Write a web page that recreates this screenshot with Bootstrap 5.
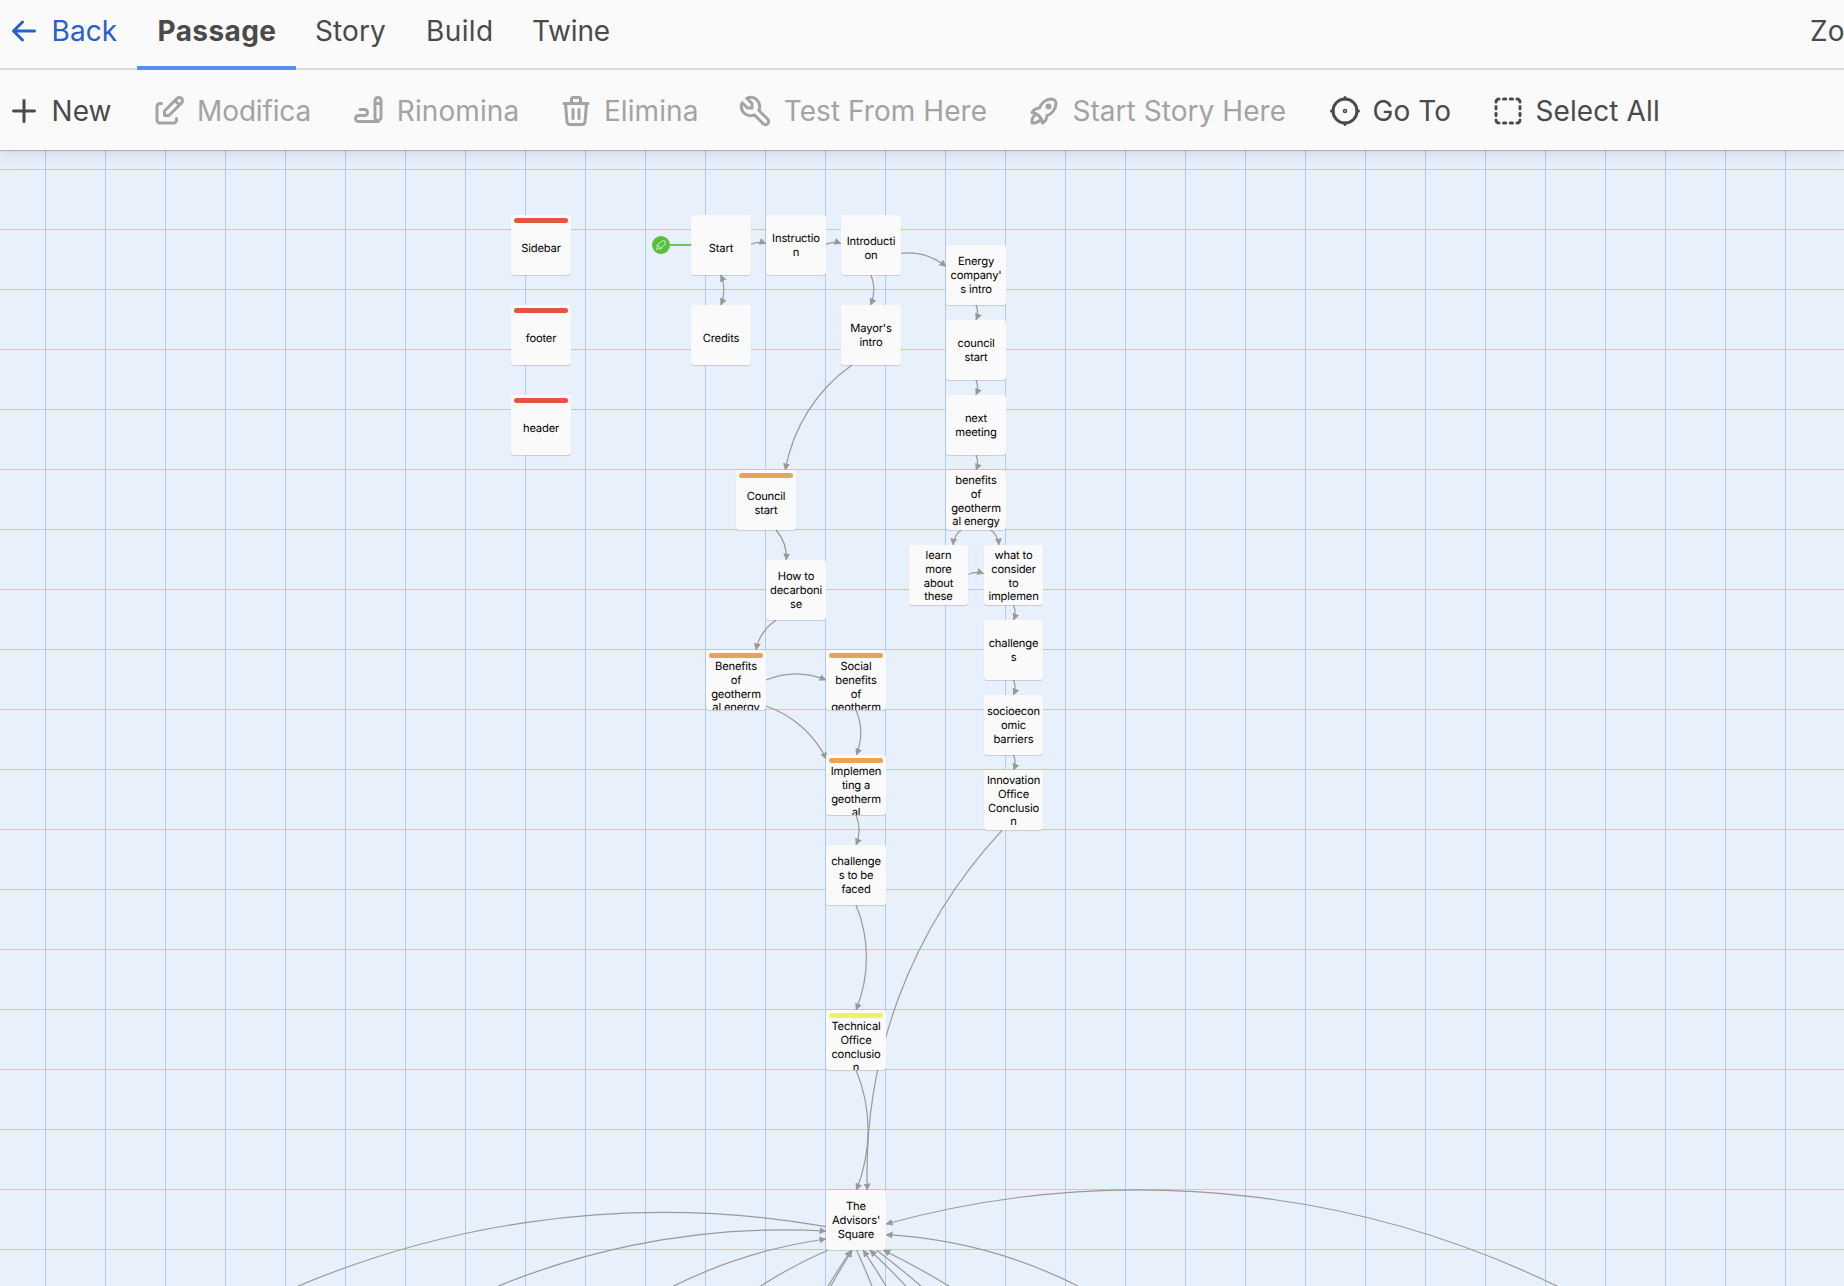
<!DOCTYPE html>
<html lang="it">
<head>
<meta charset="utf-8">
<meta name="viewport" content="width=device-width, initial-scale=1">
<title>Twine</title>
<link href="https://cdn.jsdelivr.net/npm/bootstrap@5.3.0/dist/css/bootstrap.min.css" rel="stylesheet">
<style>
  body { font-family: Inter, "Liberation Sans", sans-serif; color: #4a4a4a; background: #e8f0fc; overflow: hidden; }
  .topbar { background: #fafafa; height: 150px; font-size: 28px; line-height: 40px; letter-spacing: .1px; white-space: nowrap;
    box-shadow: 0 1px 1px rgba(0,0,0,.2), 0 4px 16px rgba(0,0,0,.1); z-index: 2; }
  .tabs-row { height: 70px; box-shadow: inset 0 -2px #d9d9d9; }
  .tabs-row > * { height: 70px; padding-top: 11px; }
  .tabs-row .back-link { width: 137px; padding-left: 6px; gap: 9.5px; color: #2a5fc5; }
  .back-link .ico { margin-top: 2px; }
  .tab-item { padding-left: 19px; }
  .tab-item.active { width: 159px; padding-left: 20.5px; font-weight: 700; letter-spacing: .4px; box-shadow: inset 0 -4px #5790ec; }
  .tab-story { width: 111px; }
  .tab-build { width: 106px; letter-spacing: .4px; }
  .tab-twine { width: 118px; letter-spacing: -.2px; }
  .zoom-label { width: 34px; }
  .tools-row { height: 80px; display: grid; padding-left: 6px; align-items: center;
    grid-template-columns: 144.6px 200.7px 207.1px 178.9px 288.7px 301px 163px 200px; }
  .tool { display: flex; align-items: center; gap: 9.5px; padding-top: 1px; }
  .tool.off { color: #a3a3a3; }
  .tool.wide { gap: 10.5px; letter-spacing: .05px; }
  .tool.tight { gap: 10.5px; letter-spacing: -.15px; }
  .ico { width: 36px; height: 36px; flex: none; fill: none; stroke: currentColor; stroke-width: 2; stroke-linecap: round; stroke-linejoin: round; }
  .map-canvas { height: 1136px;
    background-image: linear-gradient(#b0ccf3 1px, transparent 1px), linear-gradient(90deg, #b0ccf3 1px, transparent 1px);
    background-size: 60px 60px; background-position: 0 19px, 45px 0; }
  .links { position: absolute; left: 0; top: -150px; width: 1844px; height: 1286px; }
  .passage { position: absolute; width: 60px; height: 60px; background: #fafafa; border-radius: 3px; overflow: hidden;
    box-shadow: 0 1px 1px rgba(0,0,0,.15); color: #000; text-align: center; white-space: pre; font-size: 11.2px; line-height: 13.8px;
    letter-spacing: -.17px; text-rendering: geometricPrecision; }
  .stripe { position: absolute; left: 3px; right: 3px; top: 3px; height: 5px; border-radius: 2.5px; }
  .stripe-red { background: #e35347; }
  .stripe-orange { background: #eaa352; }
  .stripe-yellow { background: #eff35f; }
</style>
<script src="https://cdn.jsdelivr.net/npm/bootstrap@5.3.0/dist/js/bootstrap.bundle.min.js"></script>
</head>
<body>
<header class="topbar position-relative">
  <nav class="tabs-row d-flex">
    <a class="back-link d-flex text-decoration-none" href="#">
      <svg class="ico" viewBox="0 0 24 24"><path d="M5 12h14M5 12l6 6M5 12l6-6"/></svg><span>Back</span></a>
    <div class="tab-item active">Passage</div>
    <div class="tab-item tab-story">Story</div>
    <div class="tab-item tab-build">Build</div>
    <div class="tab-item tab-twine">Twine</div>
    <div class="zoom-label ms-auto overflow-hidden">Zo</div>
  </nav>
  <div class="tools-row">
    <div class="tool"><svg class="ico" viewBox="0 0 24 24"><path d="M12 5v14M5 12h14"/></svg>New</div>
    <div class="tool off tight"><svg class="ico" viewBox="0 0 24 24"><path d="M7 7h-1a2 2 0 0 0-2 2v9a2 2 0 0 0 2 2h9a2 2 0 0 0 2-2v-1M20.385 6.585a2.1 2.1 0 0 0-2.97-2.97l-8.415 8.385v3h3l8.385-8.415zM16 5l3 3"/></svg>Modifica</div>
    <div class="tool off"><svg class="ico" viewBox="0 0 24 24"><path d="M20 17v-12c0-1.121-.879-2-2-2s-2 .879-2 2v12l2 2l2-2zM16 7h4M18 19h-13a2 2 0 1 1 0-4h4a2 2 0 1 0 0-4h-3"/></svg>Rinomina</div>
    <div class="tool off"><svg class="ico" viewBox="0 0 24 24"><path d="M4 7h16M10 11v6M14 11v6M5 7l1 12a2 2 0 0 0 2 2h8a2 2 0 0 0 2-2l1-12M9 7v-3a1 1 0 0 1 1-1h4a1 1 0 0 1 1 1v3"/></svg>Elimina</div>
    <div class="tool off wide"><svg class="ico" viewBox="0 0 24 24"><path d="M7 10h3v-3l-3.5-3.5a6 6 0 0 1 8 8l6 6a2 2 0 0 1-3 3l-6-6a6 6 0 0 1-8-8l3.5 3.5"/></svg>Test From Here</div>
    <div class="tool off wide"><svg class="ico" viewBox="0 0 24 24"><path d="M4 13a8 8 0 0 1 7 7a6 6 0 0 0 3-5a9 9 0 0 0 6-8a3 3 0 0 0-3-3a9 9 0 0 0-8 6a6 6 0 0 0-5 3M7 14a6 6 0 0 0-3 6a6 6 0 0 0 6-3"/><circle cx="15" cy="9" r="1"/></svg>Start Story Here</div>
    <div class="tool"><svg class="ico" viewBox="0 0 24 24"><circle cx="12" cy="12" r=".5"/><circle cx="12" cy="12" r="8"/><path d="M12 3v1M3 12h1M12 20v1M20 12h1"/></svg>Go To</div>
    <div class="tool"><svg class="ico" viewBox="0 0 24 24"><path d="M4 6a2 2 0 0 1 2-2m3 0h1.5m3 0h1.5m3 0a2 2 0 0 1 2 2m0 3v1.5m0 3v1.5m0 3a2 2 0 0 1-2 2m-3 0h-1.5m-3 0h-1.5m-3 0a2 2 0 0 1-2-2m0-3v-1.5m0-3v-1.5m0-3"/></svg>Select All</div>
  </div>
</header>

<main class="map-canvas position-relative overflow-hidden" id="map">
  <svg class="links" viewBox="0 0 1844 1286" fill="none" stroke="#999" stroke-width="1.2">
    <defs>
      <marker id="tip" markerUnits="userSpaceOnUse" markerWidth="8" markerHeight="8" refX="6.5" refY="3.5" orient="auto-start-reverse">
        <path d="M0 0L7 3.5L0 7z" fill="#999" stroke="none"/>
      </marker>
    </defs>
    <g id="arcs"></g>
    <path d="M670 245H691" stroke="#6cc65a" stroke-width="2"/>
    <circle cx="661" cy="245" r="9" fill="#56c03c" stroke="none"/>
    <g transform="translate(654.4 238.4) scale(.55)" stroke="#fff" stroke-width="1.3"><path d="M4 13a8 8 0 0 1 7 7a6 6 0 0 0 3-5a9 9 0 0 0 6-8a3 3 0 0 0-3-3a9 9 0 0 0-8 6a6 6 0 0 0-5 3M7 14a6 6 0 0 0-3 6a6 6 0 0 0 6-3"/></g>
  </svg>
</main>

<script>
  // Passages: left, top, first text line offset, title, tag colour, width
  const passages = [
    [511, 215, 27, "Sidebar", "red"], [511, 305, 27, "footer", "red"], [511, 395, 27, "header", "red"],
    [691, 215, 27, "Start"], [691, 305, 27, "Credits"],
    [766, 215, 17.2, "Instructio\nn"], [841, 215, 20.3, "Introducti\non"], [841, 305, 17.3, "Mayor's\nintro"],
    [946, 245, 10.3, "Energy\ncompany'\ns intro"], [946, 320, 17.3, "council\nstart"], [946, 395, 17.3, "next\nmeeting"],
    [946, 470, 4, "benefits\nof\ngeotherm\nal energy"],
    [909, 545, 4, "learn\nmore\nabout\nthese", "", 59], [984, 545, 4, "what to\nconsider\nto\nimplemen", "", 59],
    [984, 620, 17.3, "challenge\ns", "", 59], [984, 695, 10.3, "socioecon\nomic\nbarriers", "", 59], [984, 770, 4, "Innovation\nOffice\nConclusio\nn", "", 59],
    [736, 470, 20.3, "Council\nstart", "orange"], [766, 560, 10.3, "How to\ndecarboni\nse"],
    [706, 650, 10, "Benefits\nof\ngeotherm\nal energy", "orange"], [826, 650, 10, "Social\nbenefits\nof\ngeotherm", "orange"],
    [826, 755, 10, "Implemen\nting a\ngeotherm\nal", "orange"], [826, 845, 10.3, "challenge\ns to be\nfaced"],
    [826, 1010, 10, "Technical\nOffice\nconclusio\nn", "yellow"], [826, 1190, 10.3, "The\nAdvisors'\nSquare"]
  ];
  // Links: x1, y1, x2, y2, sweep, radius (0 = proportional to the length), arrows ("n" none, "b" both)
  const links = [
    [751,244.5,766,243.5,1], [826,244.5,841,243.5,1], [720.8,275,720.8,305,1,0,"b"], [871,275,870.5,305,1], [901,253.3,946,266.5,1],
    [976,305,976,320,1], [976,380,976,395,1], [976,455,976,470,1], [961,530,953,545,0], [991,530,999,545,1], [968.5,574.5,983.5,573.5,1],
    [1013.5,605,1013.5,620,1], [1013.5,680,1013.5,695,1], [1013.5,755,1013.5,770,1], [1002,830.3,867.3,1190,0],
    [851.7,365.3,785.3,470,0], [776,530,786.3,560,1], [776,620.3,756,650,0], [766,680,826,680,1], [766,706,826.3,759,1],
    [856,710,856.3,755,1], [856,815,856,845,1], [856,905,856,1010,1], [856,1070,856.3,1190,1],
    [826,1226.7,242,1312,0,940,"n"], [448,1308.9,826,1231,1,755], [639,1305,826,1239,1,500], [827.7,1250.3,736,1303,0,470,"n"],
    [818,1303,851,1250.5,1,900], [821.5,1303,852,1250.5,1,900], [856.7,1250.3,878.5,1303,1,900,"n"], [896,1303,863.3,1250.3,0,900],
    [921.5,1303,870,1250.3,0,900], [876.7,1250.3,940,1303,1,900,"n"], [976,1303,883.7,1250.3,0,900],
    [1112,1305,886,1234.7,0,490], [1600,1308.4,886,1224,0,957]
  ];
  const map = document.getElementById("map");
  map.insertAdjacentHTML("beforeend", passages.map(([x, y, t, name, tag, w = 60]) =>
    `<div class="passage" style="left:${x}px;top:${y - 150}px;width:${w}px;padding-top:${t}px">${tag ? `<div class="stripe stripe-${tag}"></div>` : ""}${name}</div>`).join(""));
  document.getElementById("arcs").innerHTML = links.map(([a, b, c, d, sweep, radius, tips]) => {
    const r = radius || Math.hypot(c - a, d - b) * 1.31;
    return `<path d="M${a} ${b}A${r} ${r} 0 0 ${sweep} ${c} ${d}"${tips === "n" ? "" : ' marker-end="url(#tip)"'}${tips === "b" ? ' marker-start="url(#tip)"' : ""}/>`;
  }).join("");
</script>
</body>
</html>
